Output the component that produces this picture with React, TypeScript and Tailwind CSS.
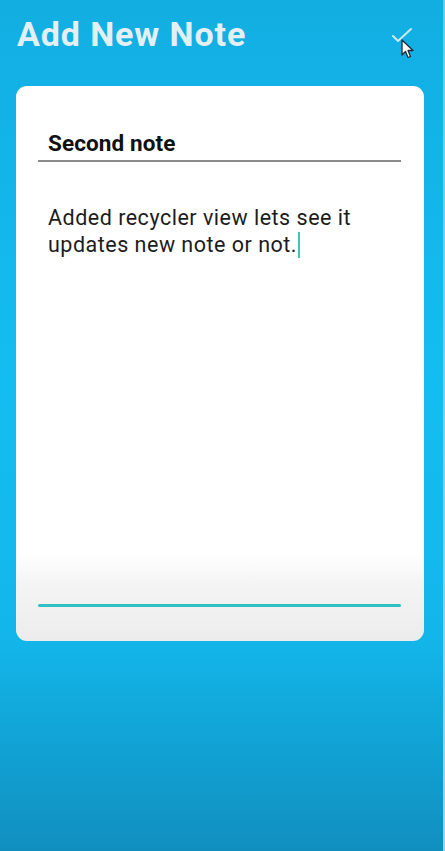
import React from "react";

export default function App() {
  return (
    <div
      className="w-[445px] h-[851px] flex flex-col relative overflow-hidden bg-[linear-gradient(180deg,#12aee2_0%,#14bdf1_45%,#13b6ea_75%,#108fbf_100%)]"
      style={{ fontFamily: "Roboto, 'Noto Sans', sans-serif" }}
    >
      <div className="h-[86px] flex items-start justify-between pl-[17px] pr-[30px] pt-[13px]">
        <h1 className="text-[34px] leading-[42px] font-bold text-[#e4eff3] tracking-[0.9px]">Add New Note</h1>
        <div className="relative mt-[14px] mr-[2px]">
          <svg width="22" height="16" viewBox="0 0 22 16" fill="none">
            <path d="M2 9 L7 14 L20 2" stroke="#c9e9f3" strokeWidth="2" strokeLinecap="round" strokeLinejoin="round" />
          </svg>
          <svg className="absolute left-[10px] top-[12px]" width="14" height="20" viewBox="0 0 14 20">
            <path d="M1 1 L1 16 L4.5 12.5 L7 18.5 L9.5 17.5 L7 11.5 L12 11.5 Z" fill="#ffffff" stroke="#1b2a3a" strokeWidth="1.3" strokeLinejoin="round" />
          </svg>
        </div>
      </div>
      <div className="mx-[16px] w-[408px] h-[555px] rounded-[11px] bg-[linear-gradient(180deg,#ffffff_0%,#ffffff_84%,#f4f4f4_90%,#ececec_100%)] flex flex-col px-[22px]">
        <div className="mt-[41px] pl-[10px] text-[22.5px] leading-[32px] font-bold text-[#111] h-[33px] tracking-[0.1px]">Second note</div>
        <div className="h-[2px] bg-[#8a8a8a] w-[363px]" />
        <div className="mt-[42px] pl-[10px] text-[21.5px] leading-[27px] text-[#1c1c1c] tracking-[0.5px]">
          Added recycler view lets see it
          <br />
          updates new note or not.<span className="inline-block w-[2px] h-[26px] bg-[#3cc9b8] align-[-6px] ml-[1px]" />
        </div>
        <div className="flex-1" />
        <div className="h-[3px] bg-[#2ec0c2] w-[363px] rounded-full mb-[34px]" />
      </div>
      <div className="absolute right-0 top-0 w-[2px] h-full bg-[linear-gradient(180deg,#6cc9e8_0%,#9fcfdd_100%)]" />
    </div>
  );
}
